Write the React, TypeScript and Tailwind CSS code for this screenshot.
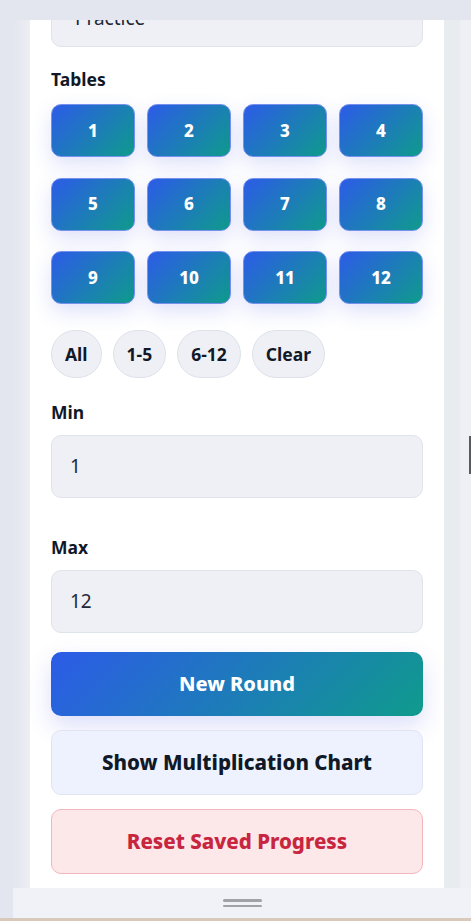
const TABLES = [1, 2, 3, 4, 5, 6, 7, 8, 9, 10, 11, 12]
const PRESETS = ['All', '1-5', '6-12', 'Clear']

const font = { fontFamily: '"Noto Sans", "Open Sans", sans-serif' }

function Field({ label, value, className }: { label: string; value: string; className?: string }) {
  return (
    <div className={className}>
      <div className="mb-[11px] text-[17.5px] leading-[24px] font-bold text-[#111827]">{label}</div>
      <div className="flex h-[63px] items-center rounded-[10px] border border-[#dfe3ec] bg-[#eef0f5] px-[18px] text-[19px] text-[#1f2937]">
        {value}
      </div>
    </div>
  )
}

export default function App() {
  return (
    <div className="relative flex h-[921px] w-[471px] flex-col overflow-hidden bg-[#e3e5ef]" style={font}>
      <div className="h-[20px] shrink-0" />
      <div className="ml-[13px] flex min-h-0 flex-1 bg-[#eef0f5]">
        <div className="w-[17px] shrink-0 bg-gradient-to-r from-[#e4e6ef] to-[#eceef3]" />
        <div className="w-[414px] shrink-0 overflow-hidden bg-white px-[21px]">
          <div className="-mt-[35px]">
            <div className="flex h-[62px] items-center rounded-[10px] border border-[#dfe3ec] bg-[#eef0f5] px-[23px] pt-[4px] text-[19px] text-[#1f2937]">
              Practice
            </div>

            <div className="mt-[20px] mb-[13px] text-[17.5px] leading-[24px] font-bold text-[#111827]">Tables</div>
            <div className="grid grid-cols-4 gap-x-[12px] gap-y-[20.5px]">
              {TABLES.map((n) => (
                <button
                  key={n}
                  className="flex h-[53px] items-center justify-center rounded-[10px] border border-[#7690ee] bg-[linear-gradient(135deg,#2c5be8,#0f9b8c)] text-[17px] font-extrabold text-white shadow-[0_8px_20px_rgba(79,92,230,0.18)]"
                >
                  {n}
                </button>
              ))}
            </div>

            <div className="mt-[26px] flex gap-[11px]">
              {PRESETS.map((p) => (
                <button
                  key={p}
                  className="flex h-[48px] items-center rounded-full border border-[#dde2ea] bg-[#eef0f5] px-[13px] text-[17.5px] font-bold text-[#111827]"
                >
                  {p}
                </button>
              ))}
            </div>

            <Field label="Min" value="1" className="mt-[22px]" />
            <Field label="Max" value="12" className="mt-[37px]" />

            <button className="mt-[19px] flex h-[64px] w-full items-center justify-center rounded-[10px] bg-[linear-gradient(135deg,#2c5be8,#0f9b8c)] text-[20px] font-extrabold text-white shadow-[0_10px_24px_rgba(79,92,230,0.2)]">
              New Round
            </button>
            <button className="mt-[14px] flex h-[65px] w-full items-center justify-center rounded-[10px] border border-[#dfe4f0] bg-[#eef2fe] text-[20.5px] font-extrabold text-[#111827]">
              Show Multiplication Chart
            </button>
            <button className="mt-[14px] flex h-[65px] w-full items-center justify-center rounded-[10px] border border-[#f4b6bc] bg-[#fce7e9] text-[20.5px] font-extrabold text-[#c8253f]">
              Reset Saved Progress
            </button>
          </div>
        </div>
        <div className="w-[16px] shrink-0 bg-[#e8ecef]" />
        <div className="flex-1 bg-[#eef0f5]" />
      </div>
      <div className="ml-[13px] flex h-[30px] shrink-0 items-center justify-center bg-[#f1f2f7]">
        <div className="flex w-[39px] flex-col gap-[3px]">
          <div className="h-[2.5px] rounded-full bg-[#a2a2a6]" />
          <div className="h-[2.5px] rounded-full bg-[#a2a2a6]" />
        </div>
      </div>
      <div className="h-[3px] shrink-0 bg-[#d8c9ba]" />
      <div className="absolute top-[436px] right-0 h-[38px] w-[2px] bg-[#5a5a5e]" />
    </div>
  )
}
